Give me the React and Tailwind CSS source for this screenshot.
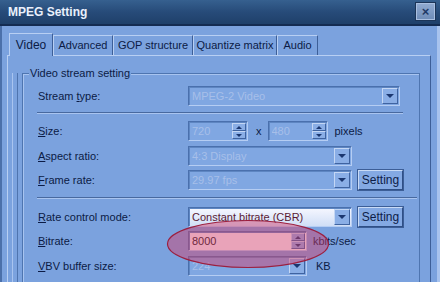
import React from "react";

function DownTri({ color = "border-t-[#1b3770]" }) {
  return (
    <div className={`h-0 w-0 border-x-[4px] border-t-[4px] border-x-transparent ${color}`} />
  );
}

function DropBtn() {
  return (
    <div className="flex h-[16px] w-[16px] shrink-0 items-center justify-center border border-t-[#c4d7f5] border-l-[#c4d7f5] border-b-[#3f63a0] border-r-[#3f63a0] bg-[#8aaee6]">
      <DownTri />
    </div>
  );
}

function SpinBtns() {
  return (
    <div className="flex h-[16px] w-[14px] shrink-0 flex-col">
      <div className="flex h-[8px] items-center justify-center border border-t-[#c4d7f5] border-l-[#c4d7f5] border-b-[#3f63a0] border-r-[#3f63a0] bg-[#8aaee6]">
        <div className="h-0 w-0 border-x-[3px] border-b-[3px] border-x-transparent border-b-[#1b3770]" />
      </div>
      <div className="flex h-[8px] items-center justify-center border border-t-[#c4d7f5] border-l-[#c4d7f5] border-b-[#3f63a0] border-r-[#3f63a0] bg-[#8aaee6]">
        <div className="h-0 w-0 border-x-[3px] border-t-[3px] border-x-transparent border-t-[#1b3770]" />
      </div>
    </div>
  );
}

function Field({ width, kind = "combo", value, bg = "bg-[#80a7e2]", text = "text-[#a7bfe9]" }) {
  return (
    <div
      className={`flex h-[20px] shrink-0 items-center border border-t-[#4a70ad] border-l-[#4a70ad] border-b-[#b5cdf3] border-r-[#b5cdf3] pl-[3px] pr-[1px] shadow-[inset_1px_1px_0_#5e86c2] ${bg}`}
      style={{ width }}
    >
      <span className={`flex-1 truncate ${text}`}>{value}</span>
      {kind === "combo" ? <DropBtn /> : <SpinBtns />}
    </div>
  );
}

function SetBtn() {
  return (
    <div className="ml-[6px] flex h-[20px] w-[45px] items-center justify-center border border-t-[#c9dbf6] border-l-[#c9dbf6] border-b-[#2f4f86] border-r-[#2f4f86] bg-[#84a9e3] text-[12px] text-[#0d1d48] outline outline-1 outline-[#3c5e97]">
      Setting
    </div>
  );
}

function Label({ u, rest }) {
  return (
    <div className="w-[150px] shrink-0 text-[#0b1b45]">
      <span className="underline">{u}</span>
      {rest}
    </div>
  );
}

function Sep({ width }) {
  return (
    <div className="-ml-px flex flex-col" style={{ width }}>
      <div className="h-px bg-[#48699f]" />
      <div className="h-px bg-[#a9c4ef]" />
    </div>
  );
}

function Tab({ label, width, active }) {
  if (active) {
    return (
      <div
        className="relative z-10 -mb-px flex h-[23px] items-start justify-center border-l border-t border-r border-l-[#b8cff3] border-t-[#b8cff3] border-r-[#3d5f98] bg-[#7ba2de] pt-[5px] text-[12px] text-[#0b1b45]"
        style={{ width }}
      >
        {label}
      </div>
    );
  }
  return (
    <div
      className="mt-[2px] flex h-[20px] items-start justify-center border-l border-t border-r border-l-[#b8cff3] border-t-[#b8cff3] border-r-[#3d5f98] bg-[#7ba2de] pt-[4px] text-[#0b1b45]"
      style={{ width }}
    >
      {label}
    </div>
  );
}

export default function App() {
  return (
    <div className="relative h-[282px] w-[440px] overflow-hidden bg-[#7ba2de] font-['Liberation_Sans',Arial,sans-serif] text-[11px] leading-none">
      {/* title bar */}
      <div className="flex h-[26px] items-center justify-between border-b-2 border-b-[#142c52] bg-gradient-to-b from-[#36608f] via-[#274b79] to-[#1f406a] pl-[8px] pr-[5px]">
        <span className="text-[12px] font-bold text-[#e9f0fc]">MPEG Setting</span>
        <div className="mb-[2px] flex h-[17px] w-[19px] items-center justify-center border border-[#a9bfe0] bg-gradient-to-b from-[#8fa9cf] to-[#6f8db9] text-[13px] font-bold text-[#1e3966] outline outline-1 outline-[#1c3558]">
          ×
        </div>
      </div>

      {/* window body */}
      <div className="flex h-[256px] border-l-2 border-r-[3px] border-l-[#4b70aa] border-r-[#a8c3ee] pl-[5px] pr-[6px]">
        <div className="flex flex-1 flex-col">
          {/* tabs */}
          <div className="mt-[7px] flex items-start pl-[2px]">
            <Tab label="Video" width={44} active />
            <Tab label="Advanced" width={60} />
            <Tab label="GOP structure" width={80} />
            <Tab label="Quantize matrix" width={84} />
            <Tab label="Audio" width={41} />
          </div>

          {/* panel */}
          <div className="flex flex-1 border-l border-t border-r border-l-[#b8cff3] border-t-[#b8cff3] border-r-[#3d5f98] pl-[4px] pr-[10px] pt-[17px]">
            <div className="w-[5px] shrink-0 border-l border-l-[#a9c4ef]" />
            <div className="w-[5px] shrink-0 border-l border-l-[#4f74ae]" />
            <div className="relative flex-1 border-l border-t border-r border-[#4e75b0] pl-[15px] pt-[12px] shadow-[inset_1px_1px_0_#a8c4f0]">
              <div className="absolute -top-[6px] left-[6px] bg-[#7ba2de] px-[1px] text-[#0b1b45]">
                Video stream setting
              </div>

              <div className="flex h-[20px] items-center">
                <Label u="" rest={<>Stream <span className="underline">t</span>ype:</>} />
                <Field width={212} value="MPEG-2 Video" />
              </div>

              <div className="mt-[6px]">
                <Sep width={366} />
              </div>

              <div className="mt-[7px] flex h-[20px] items-center">
                <Label u="S" rest="ize:" />
                <Field width={60} kind="spin" value="720" />
                <span className="ml-[8px] mr-[6px] text-[#0b1b45]">x</span>
                <Field width={60} kind="spin" value="480" />
                <span className="ml-[7px] text-[#0b1b45]">pixels</span>
              </div>

              <div className="mt-[5px] flex h-[20px] items-center">
                <Label u="A" rest="spect ratio:" />
                <Field width={164} value="4:3 Display" />
              </div>

              <div className="mt-[4px] flex h-[20px] items-center">
                <Label u="F" rest="rame rate:" />
                <Field width={164} value="29.97 fps" />
                <SetBtn />
              </div>

              <div className="mt-[7px]">
                <Sep width={380} />
              </div>

              <div className="mt-[8px] flex h-[20px] items-center">
                <Label u="R" rest="ate control mode:" />
                <Field
                  width={164}
                  value="Constant bitrate (CBR)"
                  bg="bg-gradient-to-b from-[#f6f7ff] to-[#d0def6]"
                  text="text-[#5a1a34]"
                />
                <SetBtn />
              </div>

              <div className="mt-[4px] flex h-[20px] items-center">
                <Label u="B" rest="itrate:" />
                <Field width={119} kind="spin" value="8000" bg="bg-[#f7f7fc]" text="text-[#111]" />
                <span className="ml-[6px] text-[#0b1b45]">kbits/sec</span>
              </div>

              <div className="mt-[5px] flex h-[20px] items-center">
                <Label u="V" rest="BV buffer size:" />
                <Field width={119} kind="combo" value="224" />
                <span className="ml-[9px] text-[#0b1b45]">KB</span>
              </div>
            </div>
          </div>
        </div>
      </div>

      {/* red highlight ellipse */}
      <svg className="pointer-events-none absolute left-[166px] top-[219px]" width="164" height="50" viewBox="0 0 164 50">
        <ellipse cx="82" cy="25" rx="80.5" ry="23.5" fill="rgba(214,60,104,0.45)" stroke="#9c1f3f" strokeWidth="1.2" />
      </svg>
    </div>
  );
}
